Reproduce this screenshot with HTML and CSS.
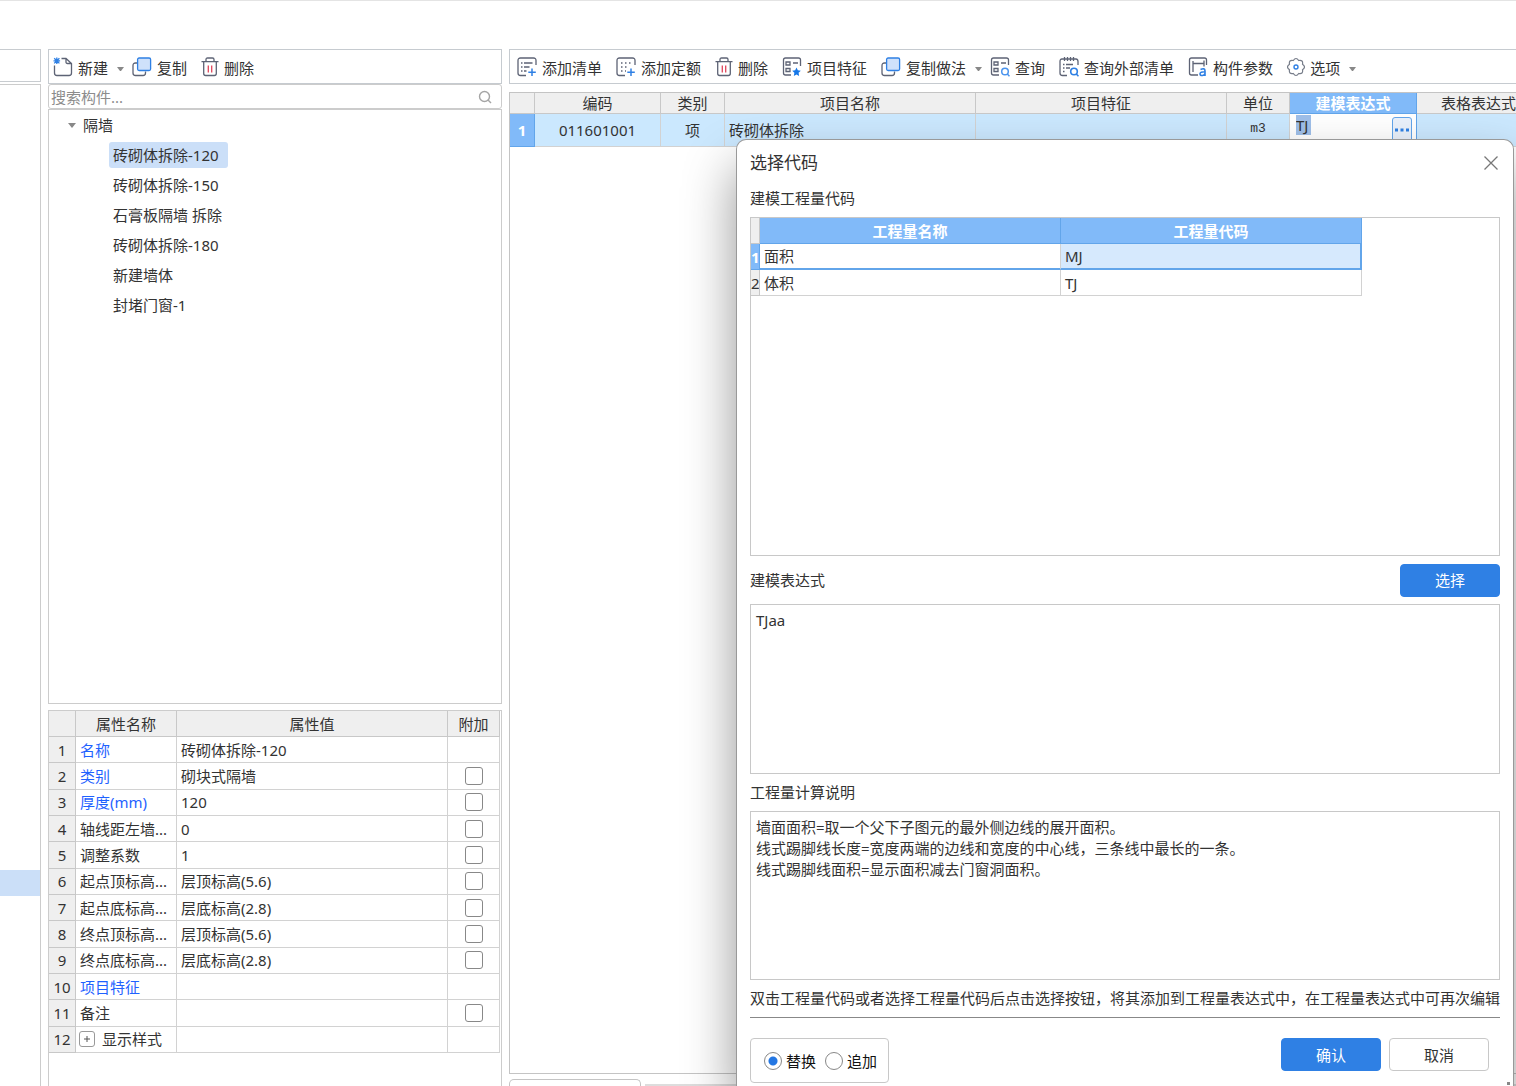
FILE: index.html
```html
<!DOCTYPE html>
<html lang="zh-CN">
<head>
<meta charset="utf-8">
<title>构件做法</title>
<link rel="stylesheet" href="styles.css">
</head>
<body>
<svg class="defs" aria-hidden="true">
  <symbol id="i-copy" viewBox="0 0 20 20"><path d="M5 6H3.500Q1 6 1 8.500V16Q1 18.500 3.500 18.500H11Q13.500 18.500 13.500 16V14.500" fill="none" stroke="#5d6375" stroke-width="1.300"/><rect x="5.600" y="1" width="13" height="12.500" rx="1.500" fill="#cfe1fb" stroke="#2f80e4" stroke-width="1.300"/></symbol>
  <symbol id="i-trash" viewBox="0 0 18 20"><path d="M.5 4.700h17M5 4.500V2.500Q5 1 6.500 1h5Q13 1 13 2.500v2M2.700 5v11.500q0 2 2 2h8.600q2 0 2-2V5" fill="none" stroke="#5d6375" stroke-width="1.300"/><path d="M7.300 8.500v7M10.700 8.500v7" stroke="#e0465b" stroke-width="1.300"/></symbol>
</svg>
<main class="app">
  <aside class="rail">
    <div class="rail-head"></div>
    <div class="rail-body"><div class="rail-current"></div></div>
  </aside>

  <section class="parts">
    <div class="toolbar">
      <button class="tool"><svg width="20" height="20" viewBox="0 0 20 20" fill="none"><path d="M1.500 8.500V16q0 2.500 2.500 2.500h12q2.500 0 2.500-2.500V6.500L13 1.500H8.500M13 1.500V5q0 1.500 1.500 1.500h4" stroke="#5d6375" stroke-width="1.300"/><path d="M3.800 .5v6.500M.5 3.800h6.600M1.200 1.200l5.200 5.200M6.400 1.200l-5.200 5.200" stroke="#2f80e4" stroke-width="1.300"/></svg>新建<i class="caret"></i></button>
      <button class="tool"><svg width="20" height="20"><use href="#i-copy"/></svg>复制</button>
      <button class="tool"><svg width="18" height="20"><use href="#i-trash"/></svg>删除</button>
    </div>
    <div class="search">
      <input type="text" placeholder="搜索构件..." aria-label="搜索构件">
      <svg width="14" height="14" viewBox="0 0 14 14" fill="none" stroke="#a5a5a5" stroke-width="1.400"><circle cx="6.500" cy="6.500" r="5"/><path d="M10 10l3 3"/></svg>
    </div>
    <div class="tree">
      <button class="tree-root"><i class="caret caret-tree"></i>隔墙</button>
      <ul class="tree-list">
        <li><button class="tree-item is-current">砖砌体拆除-120</button></li>
        <li><button class="tree-item">砖砌体拆除-150</button></li>
        <li><button class="tree-item">石膏板隔墙 拆除</button></li>
        <li><button class="tree-item">砖砌体拆除-180</button></li>
        <li><button class="tree-item">新建墙体</button></li>
        <li><button class="tree-item">封堵门窗-1</button></li>
      </ul>
    </div>
    <div class="props">
      <table class="grid props-table">
        <colgroup><col class="c-no"><col class="c-name"><col><col class="c-extra"></colgroup>
        <thead><tr><th></th><th>属性名称</th><th>属性值</th><th>附加</th></tr></thead>
        <tbody>
          <tr><th>1</th><td class="key">名称</td><td>砖砌体拆除-120</td><td></td></tr>
          <tr><th>2</th><td class="key">类别</td><td>砌块式隔墙</td><td class="mid"><input type="checkbox" aria-label="附加 类别"></td></tr>
          <tr><th>3</th><td class="key">厚度(mm)</td><td>120</td><td class="mid"><input type="checkbox" aria-label="附加 厚度"></td></tr>
          <tr><th>4</th><td>轴线距左墙...</td><td>0</td><td class="mid"><input type="checkbox" aria-label="附加 轴线距左墙"></td></tr>
          <tr><th>5</th><td>调整系数</td><td>1</td><td class="mid"><input type="checkbox" aria-label="附加 调整系数"></td></tr>
          <tr><th>6</th><td>起点顶标高...</td><td>层顶标高(5.6)</td><td class="mid"><input type="checkbox" aria-label="附加 起点顶标高"></td></tr>
          <tr><th>7</th><td>起点底标高...</td><td>层底标高(2.8)</td><td class="mid"><input type="checkbox" aria-label="附加 起点底标高"></td></tr>
          <tr><th>8</th><td>终点顶标高...</td><td>层顶标高(5.6)</td><td class="mid"><input type="checkbox" aria-label="附加 终点顶标高"></td></tr>
          <tr><th>9</th><td>终点底标高...</td><td>层底标高(2.8)</td><td class="mid"><input type="checkbox" aria-label="附加 终点底标高"></td></tr>
          <tr><th>10</th><td class="key">项目特征</td><td></td><td></td></tr>
          <tr><th>11</th><td>备注</td><td></td><td class="mid"><input type="checkbox" aria-label="附加 备注"></td></tr>
          <tr><th>12</th><td><div class="expand"><button class="plus" aria-label="展开"><svg width="8" height="8" viewBox="0 0 8 8" stroke="#555"><path d="M4 1v6M1 4h6"/></svg></button>显示样式</div></td><td></td><td></td></tr>
        </tbody>
      </table>
    </div>
  </section>

  <section class="works">
    <div class="toolbar">
      <button class="tool"><svg width="20" height="20" viewBox="0 0 20 20" fill="none"><path d="M19 8V3.500Q19 1 16.500 1h-13Q1 1 1 3.500v12.500q0 2.500 2.500 2.500H9" stroke="#5d6375" stroke-width="1.300"/><path d="M4 6h1.500M7 6h8.500M4 10h1.500M7 10h5.500M4 14h1.500M7 14h2.500" stroke="#5d6375" stroke-width="1.300"/><path d="M15 11.500v7.500M11.300 15.200h7.500" stroke="#2f80e4" stroke-width="1.500"/></svg>添加清单</button>
      <button class="tool"><svg width="20" height="20" viewBox="0 0 20 20" fill="none"><path d="M19 8V3.500Q19 1 16.500 1h-13Q1 1 1 3.500v12.500q0 2.500 2.500 2.500H9" stroke="#5d6375" stroke-width="1.300"/><path d="M5 6h11M5 10h8M5 14h5" stroke="#5d6375" stroke-width="1.500" stroke-dasharray="1.500 2.500"/><path d="M15 11.500v7.500M11.300 15.200h7.500" stroke="#2f80e4" stroke-width="1.500"/></svg>添加定额</button>
      <button class="tool"><svg width="18" height="20"><use href="#i-trash"/></svg>删除</button>
      <button class="tool"><svg width="20" height="20" viewBox="0 0 20 20" fill="none"><path d="M18.500 9V3q0-2-2-2h-13q-2 0-2 2v13q0 2 2 2H9M4 5h4v3H4zM4 11.500h4v3H4zM11 6h5" stroke="#5d6375" stroke-width="1.300"/><path d="M14.500 10.500l1.300 2.800 3 .4-2.200 2.100.5 3.100-2.600-1.500-2.700 1.500.6-3.100-2.200-2.100 3-.4z" fill="#1677e8"/></svg>项目特征</button>
      <button class="tool"><svg width="20" height="20"><use href="#i-copy"/></svg>复制做法<i class="caret"></i></button>
      <button class="tool"><svg width="20" height="20" viewBox="0 0 20 20" fill="none"><path d="M18.500 8V3q0-2-2-2h-13q-2 0-2 2v13q0 2 2 2H9M4 5h4v3H4zM4 11.500h4v3H4zM11 6h5" stroke="#5d6375" stroke-width="1.300"/><circle cx="15" cy="14.500" r="3.300" stroke="#4b94ee" stroke-width="1.500"/><path d="M17.300 17l2.200 2.300" stroke="#4b94ee" stroke-width="1.500"/></svg>查询</button>
      <button class="tool"><svg width="20" height="20" viewBox="0 0 20 20" fill="none"><path d="M19 8V4.500Q19 2 17 2H3Q1 2 1 4.500V16q0 2.500 2.500 2.500H8M5.500 0v4M8.500 0v4M11.500 0v4M14.500 0v4M4 7.500h1.500M7 7.500h7M4 11h1.500M7 11h4M4 14.500h1.500" stroke="#5d6375" stroke-width="1.300"/><circle cx="15" cy="14.500" r="3.300" stroke="#2f80e4" stroke-width="1.600"/><path d="M17.300 17l2.200 2.300" stroke="#2f80e4" stroke-width="1.600"/></svg>查询外部清单</button>
      <button class="tool"><svg width="20" height="20" viewBox="0 0 20 20" fill="none"><path d="M18.500 8V3q0-2-2-2h-13q-2 0-2 2v13q0 2 2 2H10M5 4v11M5 6.500h11M16 3.500v6" stroke="#5d6375" stroke-width="1.300"/><path d="M12.500 12.500q4.500-2 4.500 1.500v5M17 14.800q-5-.2-5 2 .2 2 2.500 1.700 2-.3 2.500-2" stroke="#2f80e4" stroke-width="1.600"/></svg>构件参数</button>
      <button class="tool"><svg width="18" height="20" viewBox="0 0 18 20" fill="none"><path d="M15.500 7.300Q19.500 10 15.500 12.700Q16.400 17.400 11.700 16.500Q9 20.500 6.300 16.500Q1.600 17.400 2.500 12.700Q-1.500 10 2.500 7.300Q1.600 2.600 6.300 3.500Q9-.5 11.700 3.500Q16.400 2.600 15.500 7.300z" stroke="#777d8a" stroke-width="1.200"/><circle cx="9" cy="10" r="2" stroke="#2f80e4" stroke-width="1.400"/></svg>选项<i class="caret"></i></button>
    </div>
    <div class="sheet">
      <table class="grid works-table">
        <colgroup><col class="w-no"><col class="w-code"><col class="w-kind"><col class="w-wide"><col class="w-wide"><col class="w-unit"><col class="w-expr"><col class="w-last"></colgroup>
        <thead><tr><th></th><th>编码</th><th>类别</th><th>项目名称</th><th>项目特征</th><th>单位</th><th class="is-active">建模表达式</th><th>表格表达式</th></tr></thead>
        <tbody><tr><th class="is-active">1</th><td class="mid">011601001</td><td class="mid">项</td><td>砖砌体拆除</td><td></td><td class="mid unit">m3</td>
          <td class="editor"><div class="edit-row"><input type="text" value="TJ" aria-label="建模表达式"><button class="more" aria-label="选择代码"><svg width="14" height="4" viewBox="0 0 14 4" fill="#2f80e4"><path d="M0 .5h3v3H0zM5.500.5h3v3h-3zM11 .5h3v3h-3z"/></svg></button></div></td><td></td></tr></tbody>
      </table>
    </div>
    <div class="tabs"><div class="tab"></div><div class="tab-rest"></div></div>
  </section>

  <form class="dialog" role="dialog" aria-labelledby="dlg-title">
    <header class="dialog-head">
      <h1 id="dlg-title">选择代码</h1>
      <button type="button" class="close" aria-label="关闭"><svg width="14" height="14" viewBox="0 0 14 14" stroke="#777" stroke-width="1.300"><path d="M.5.5l13 13M13.500.5l-13 13"/></svg></button>
    </header>
    <h2 class="label">建模工程量代码</h2>
    <div class="box codes">
      <table class="grid codes-table">
        <colgroup><col class="k-no"><col><col></colgroup>
        <thead><tr><th></th><th class="is-active">工程量名称</th><th class="is-active">工程量代码</th></tr></thead>
        <tbody>
          <tr class="is-picked"><th class="is-active">1</th><td>面积</td><td class="is-cell">MJ</td></tr>
          <tr><th>2</th><td>体积</td><td>TJ</td></tr>
        </tbody>
      </table>
    </div>
    <div class="expr-row"><label class="label" for="expr">建模表达式</label><button type="button" class="btn primary">选择</button></div>
    <textarea id="expr" class="box memo">TJaa</textarea>
    <label class="label note-label" for="note">工程量计算说明</label>
    <textarea id="note" class="box memo" readonly>墙面面积=取一个父下子图元的最外侧边线的展开面积。
线式踢脚线长度=宽度两端的边线和宽度的中心线，三条线中最长的一条。
线式踢脚线面积=显示面积减去门窗洞面积。</textarea>
    <p class="hint">双击工程量代码或者选择工程量代码后点击选择按钮，将其添加到工程量表达式中，在工程量表达式中可再次编辑</p>
    <footer class="dialog-foot">
      <div class="modes">
        <label><input type="radio" name="mode" checked>替换</label>
        <label><input type="radio" name="mode">追加</label>
      </div>
      <div class="actions"><button type="button" class="btn primary">确认</button><button type="button" class="btn">取消</button></div>
    </footer>
    <i class="grip"></i>
  </form>
</main>
</body>
</html>
```

FILE: styles.css
```css
* { box-sizing: border-box; }

body, button, input, textarea {
  font: 15px/20px "Noto Sans", "Noto Sans CJK SC", sans-serif;
  color: #333;
}
body { margin: 0; background: #fff; }
button { padding: 0; border: 0; background: none; white-space: nowrap; }
h1, h2, p, ul { margin: 0; padding: 0; font-weight: 400; }
ul { list-style: none; }
.defs { position: absolute; width: 0; height: 0; }

.app {
  position: relative;
  display: grid;
  grid-template-columns: 41px 454px minmax(0, 1fr);
  column-gap: 7px;
  min-height: 100vh;
  padding-top: 48px;
  border-top: 1px solid #e4e4e4;
  overflow: hidden;
}

/* narrow panel on the left */
.rail { display: flex; flex-direction: column; gap: 2px; }
.rail-head { height: 33px; border: 1px solid #c8ccd0; border-left: 0; }
.rail-body {
  flex: 1;
  display: flex;
  flex-direction: column;
  justify-content: flex-end;
  padding-bottom: 190px;
  border: 1px solid #ccc;
  border-width: 1px 1px 0 0;
}
.rail-current { height: 26px; background: #cbdff8; }

.toolbar {
  display: flex;
  align-items: center;
  gap: 14px;
  height: 35px;
  padding: 3px 4px 0;
  border: 1px solid #c6cbd0;
}
.tool { display: flex; align-items: center; gap: 5px; flex: none; }
.tool svg { flex: none; margin-bottom: 3px; }
.caret {
  width: 7px;
  margin: 2px -6px 0 4px;
  border: 3px solid transparent;
  border-top: 4px solid #888;
  border-bottom: 0;
}

/* component tree */
.parts { display: flex; flex-direction: column; }
.search {
  display: flex;
  align-items: center;
  height: 25px;
  padding: 0 9px 0 2px;
  border: 1px solid #ccc;
  border-radius: 3px;
}
.search input { flex: 1; padding: 0; border: 0; outline: 0; }
.search input::placeholder { color: #8c8c8c; opacity: 1; }
.tree { flex: 1; border: 1px solid #ccc; }
.tree-root { display: flex; align-items: center; gap: 7px; height: 30px; margin-left: 19px; }
.caret-tree { width: 8px; margin: 0; border-width: 5px 4px 0; }
.tree-list li { display: flex; align-items: center; height: 30px; padding-left: 60px; }
.tree-item { height: 26px; padding: 0 9px 0 4px; border-radius: 3px; }
.is-current { background: #cbdff8; }

/* tables */
.grid { table-layout: fixed; border-collapse: separate; border-spacing: 0; }
.grid th, .grid td {
  height: 26px;
  padding: 0 4px;
  border: 1px solid #d2d2d2;
  border-width: 0 1px 1px 0;
  overflow: hidden;
  white-space: nowrap;
  text-align: left;
}
.grid th { padding: 0; background: #efefef; border-color: #c8c8c8; font-weight: 400; text-align: center; }
.grid .mid { text-align: center; }
.grid .is-active { background: #81baf9; border-color: #62a5ea; color: #fff; font-weight: 700; }

.props { margin-top: 6px; padding: 0 1px 33px 0; border: 1px solid #ccc; border-bottom: 0; }
.props-table { width: 100%; height: 342px; }
.c-no { width: 27px; }
.c-name { width: 101px; }
.c-extra { width: 52px; }
.grid .key { color: #1f62ff; }
.props input {
  display: block;
  appearance: none;
  width: 18px;
  height: 18px;
  margin: 0 auto;
  border: 1px solid #888;
  border-radius: 3px;
  background: #fff;
}
.expand { display: flex; align-items: center; gap: 7px; }
.plus {
  display: flex;
  align-items: center;
  justify-content: center;
  width: 16px;
  height: 16px;
  margin-left: -1px;
  border: 1px solid #999;
  border-radius: 3px;
}

/* work items */
.works { display: flex; flex-direction: column; }
.works .toolbar { padding-left: 7px; border-right: 0; }
.sheet { flex: 1; margin-top: 8px; border: 1px solid #c4c4c4; border-right: 0; overflow: hidden; }
.works-table { width: 1031px; }
.w-no { width: 25px; }
.w-code { width: 126px; }
.w-kind { width: 64px; }
.w-wide { width: 251px; }
.w-unit { width: 63px; }
.w-expr { width: 127px; }
.w-last { width: 124px; }
.works-table thead th { height: 21px; }
.works-table tbody td, .works-table tbody th { height: 33px; padding-bottom: 1px; }
.works-table tbody td { background: #cbe8fe; }
.works-table tbody .unit { padding-bottom: 3px; font: 13px/20px "Liberation Mono", monospace; }
.works-table tbody .editor { padding: 0; background: #fff; border-color: #62a5ea; vertical-align: top; }
.edit-row { display: flex; justify-content: space-between; height: 32px; padding: 1px 4px 0 6px; }
.edit-row input {
  width: 15px;
  height: 20px;
  padding: 0;
  border: 0;
  border-radius: 0;
  background: #9fbfe9;
  outline: 0;
}
.more {
  display: flex;
  align-items: center;
  justify-content: center;
  width: 20px;
  height: 25px;
  margin-top: 2px;
  border: 1px solid #62a5ea;
  border-radius: 3px;
  background: #eaf1fb;
}
.tabs { display: flex; align-items: flex-end; gap: 4px; height: 12px; }
.tab { width: 132px; height: 7px; border: 1px solid #c4c4c4; border-bottom: 0; border-radius: 5px 5px 0 0; }
.tab-rest { flex: 1; height: 2px; background: #ddd; }

/* code picker */
.dialog {
  position: absolute;
  top: 138px;
  right: 2px;
  bottom: 0;
  display: flex;
  flex-direction: column;
  width: 778px;
  padding: 0 13px 3px;
  border: 1px solid #999;
  border-bottom: 0;
  border-radius: 10px 10px 0 0;
  background: #fff;
  box-shadow: 0 28px 52px rgba(0, 0, 0, .42);
}
.dialog-head { display: flex; align-items: center; justify-content: space-between; height: 46px; padding-right: 2px; }
.dialog h1 { font-size: 17px; line-height: 24px; }
.close { display: flex; }
.label { font-size: 15px; line-height: 20px; }
h2.label { padding: 2px 0 9px; }
.box { border: 1px solid #c8c8c8; }
.codes { flex: 2 0 28px; }
.codes-table { width: 611px; }
.k-no { width: 9px; }
.is-picked td { border-bottom: 2px solid #62a5ea; }
.codes-table .is-cell { background: #d6e9fd; border-right: 2px solid #62a5ea; }
.expr-row { display: flex; align-items: center; justify-content: space-between; height: 48px; }
.btn { width: 100px; height: 33px; border: 1px solid #c8c8c8; border-radius: 4px; background: #fff; }
.primary { border-color: #2f80e4; background: #2f80e4; color: #fff; }
.memo {
  flex: 1 0 14px;
  display: block;
  width: 100%;
  padding: 5px;
  border-radius: 0;
  outline: 0;
  resize: none;
  line-height: 21px;
}
.note-label { padding: 8px 0 9px; }
.hint { padding: 8px 0 9px; border-bottom: 1px solid #888; white-space: nowrap; }
.dialog-foot { display: flex; justify-content: space-between; padding: 20px 11px 0 0; }
.modes { display: flex; align-items: center; gap: 9px; height: 45px; padding: 0 11px 0 13px; border: 1px solid #c8c8c8; border-radius: 4px; }
.modes label { display: flex; align-items: center; gap: 4px; color: #111; }
.modes input {
  appearance: none;
  width: 18px;
  height: 18px;
  margin: 0;
  border: 1px solid #888;
  border-radius: 50%;
}
.modes input:checked { background: radial-gradient(circle, #2477e3 0 4px, #fff 5px); }
.actions { display: flex; gap: 8px; }
.grip { position: absolute; right: 3px; bottom: 1px; width: 3px; height: 3px; background: #888; }
```
